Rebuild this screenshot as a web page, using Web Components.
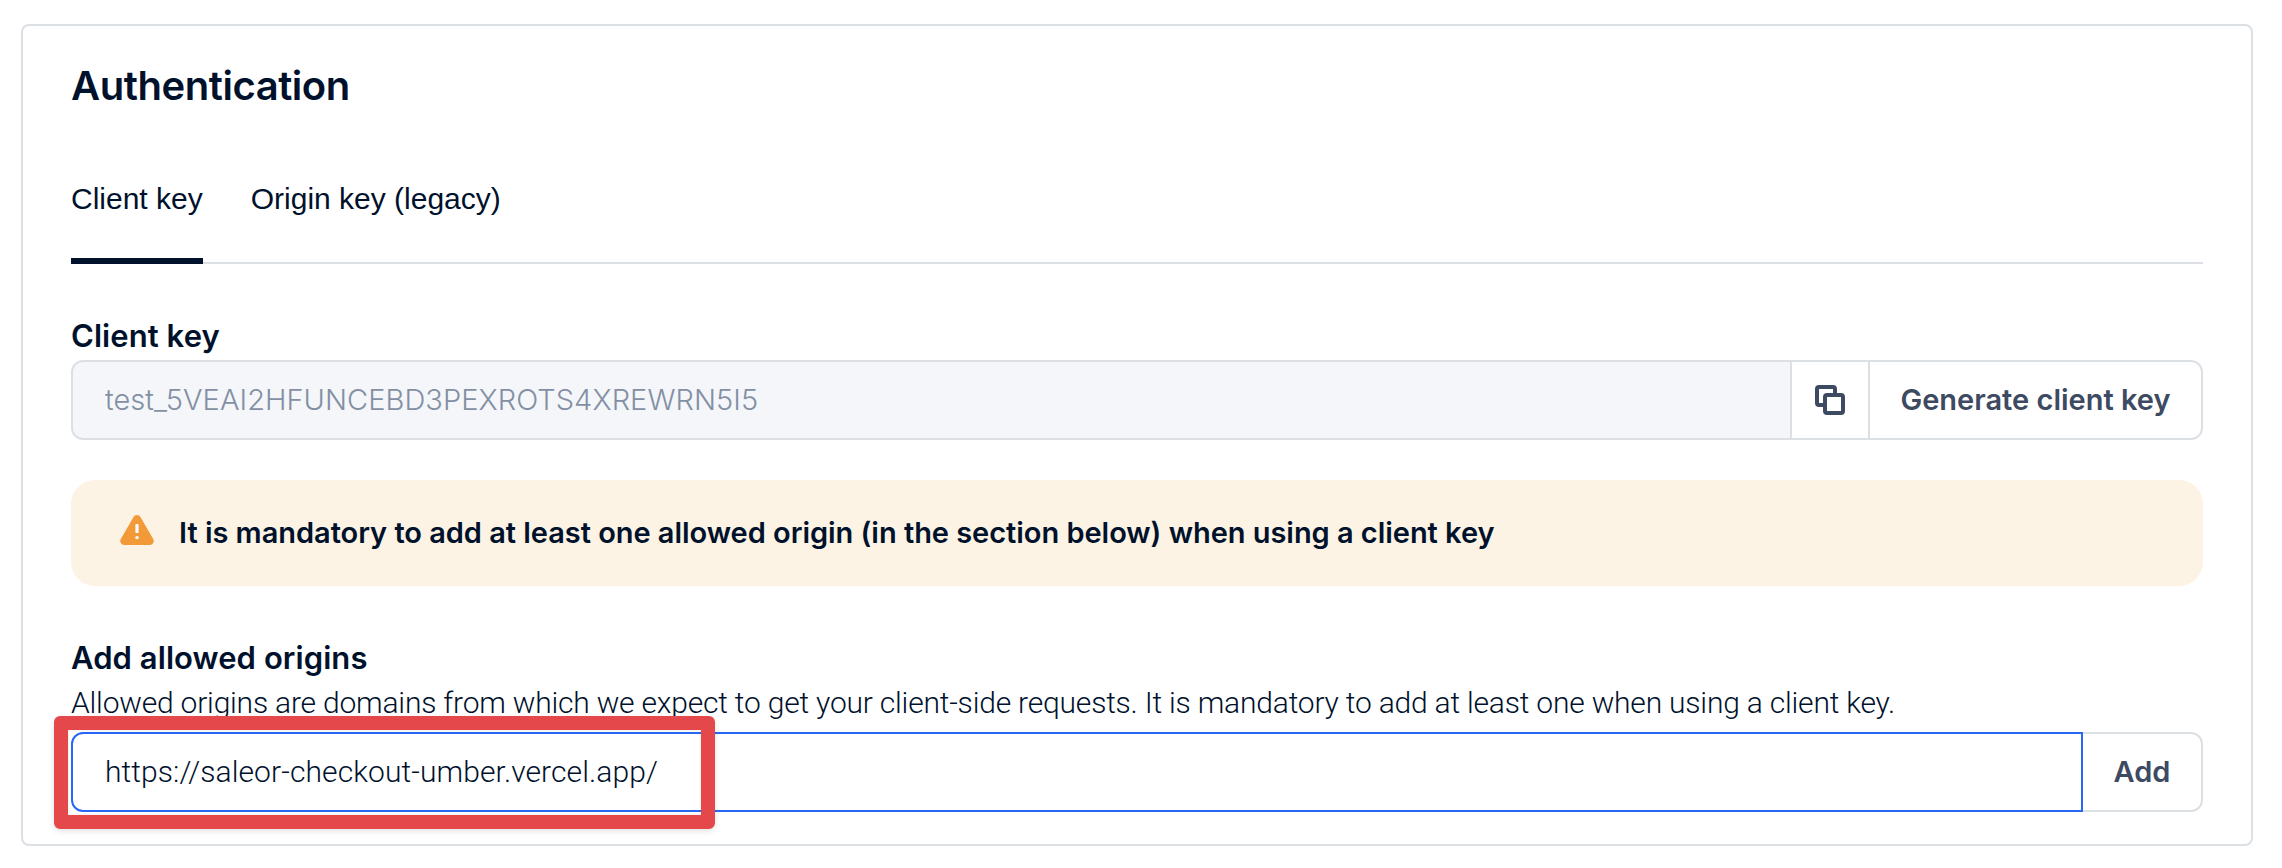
<!DOCTYPE html>
<html lang="en">
<head>
<meta charset="utf-8">
<title>Authentication</title>
<style>
  body { margin: 0; background: #fff; font-family: Inter, "Liberation Sans", sans-serif; color: #00112c; }
</style>
</head>
<body>
<auth-card>
  <card-title>Authentication</card-title>
  <tab-bar>
    <tab-item active>Client key</tab-item>
    <tab-item>Origin key (legacy)</tab-item>
  </tab-bar>
  <field-label class="key">Client key</field-label>
  <input-group>
    <field-value disabled>test_5VEAI2HFUNCEBD3PEXROTS4XREWRN5I5</field-value>
    <copy-button></copy-button>
    <action-button>Generate client key</action-button>
  </input-group>
  <warning-alert>It is mandatory to add at least one allowed origin (in the section below) when using a client key</warning-alert>
  <field-label>Add allowed origins</field-label>
  <field-hint>Allowed origins are domains from which we expect to get your client-side requests. It is mandatory to add at least one when using a client key.</field-hint>
  <input-group>
    <field-value focused><focus-marker></focus-marker>https://saleor-checkout-umber.vercel.app/</field-value>
    <action-button after-focus>Add</action-button>
  </input-group>
</auth-card>
<script>
const define = (name, css, html = '<slot></slot>') => {
  const template = document.createElement('template');
  template.innerHTML = `<style>*{box-sizing:border-box}:host{box-sizing:border-box}${css}</style>${html}`;
  customElements.define(name, class extends HTMLElement {
    constructor() {
      super();
      this.attachShadow({ mode: 'open' }).append(template.content.cloneNode(true));
    }
  });
};

define('auth-card', `
  :host { display: flex; flex-direction: column; width: 2232px; height: 822px; margin: 24px 0 0 21px;
    padding: 36px 48px 0; border: 2px solid #dce0e5; border-radius: 8px; background: #fff; }
  ::slotted(input-group) { margin-top: 6px; }
  ::slotted(warning-alert) { margin: 40px 0 54px; }
  ::slotted(field-hint) { margin: 9px 0 5px; }
  ::slotted(.key) { margin-top: 54px; }
`);
define('card-title', `:host { display: block; font-size: 40px; line-height: 47px; font-weight: 600; letter-spacing: -0.45px; }`);
define('tab-bar', `:host { display: flex; gap: 48px; height: 155px; padding-top: 70px; box-shadow: inset 0 -2px #dce0e5; }`);
define('tab-item', `
  :host { display: block; font: 30px/40px "Liberation Sans", Arial, sans-serif; white-space: nowrap; }
  :host([active]) { box-shadow: inset 0 -6px #00112c; }
`);
define('field-label', `:host { display: block; font-size: 31px; line-height: 36px; font-weight: 600; letter-spacing: 0.07px; }`);
define('field-hint', `:host { display: block; font: 300 30px/36px Roboto, sans-serif; letter-spacing: -0.2px; white-space: nowrap; }`);
define('input-group', `:host { display: flex; height: 80px; }`);
define('field-value', `
  :host { display: flex; align-items: center; flex: 1; position: relative; padding-left: 32px; border: 2px solid #dce0e5;
    border-radius: 12px 0 0 12px; white-space: nowrap; }
  :host([disabled]) { font: 300 29px/36px Inter, sans-serif; letter-spacing: 0.05px; color: #8390a3; background: #f4f6fa;
    padding-bottom: 1px; }
  :host([focused]) { font: 300 30px/36px Roboto, sans-serif; letter-spacing: 0.09px; border-color: #2866f5; }
`);
define('copy-button', `
  :host { display: flex; align-items: center; justify-content: center; width: 76px; border: solid #dce0e5; border-width: 2px 0; }
  svg { display: block; }
`, `<svg width="30" height="30" viewBox="0 0 30 30" fill="none" stroke="#3d4a61" stroke-width="4">
  <path d="M10 20H4a2 2 0 0 1-2-2V4a2 2 0 0 1 2-2h14a2 2 0 0 1 2 2v6"/><rect x="10" y="10" width="18" height="18" rx="2"/></svg>`);
define('action-button', `
  :host { display: flex; align-items: center; justify-content: center; width: 335px; border: 2px solid #dce0e5; padding-bottom: 1px;
    border-radius: 0 12px 12px 0; font-size: 29px; line-height: 36px; font-weight: 600; color: #3d4a61; white-space: nowrap; }
  :host([after-focus]) { width: 120px; border-left: 0; }
`);
define('warning-alert', `
  :host { display: flex; align-items: center; height: 106px; padding: 0 0 1px 49px; border-radius: 24px; background: #fdf3e4;
    font-size: 29px; line-height: 36px; font-weight: 600; letter-spacing: -0.04px; white-space: nowrap; }
  svg { display: block; margin: -5px 25px 0 0; }
`, `<svg width="34" height="30" viewBox="0 0 34 30"><path d="M13.4 2.2a4.1 4.1 0 0 1 7.2 0L33.2 24a4 4 0 0 1-3.5 6H4.3a4 4 0 0 1-3.5-6z" fill="#f39a38"/>
  <rect x="15.4" y="9" width="3.2" height="9" rx=".8" fill="#fff"/><circle cx="17" cy="22.6" r="1.7" fill="#fff"/></svg><slot></slot>`);
define('focus-marker', `
  :host { display: block; position: absolute; left: -19px; top: -18px; width: 661px; height: 113px; border: 14px solid #e5484b;
    border-radius: 6px; box-shadow: 0 2px 6px rgba(0,0,0,.12), inset 0 0 3px rgba(0,0,0,.12); }
`);
</script>
</body>
</html>
